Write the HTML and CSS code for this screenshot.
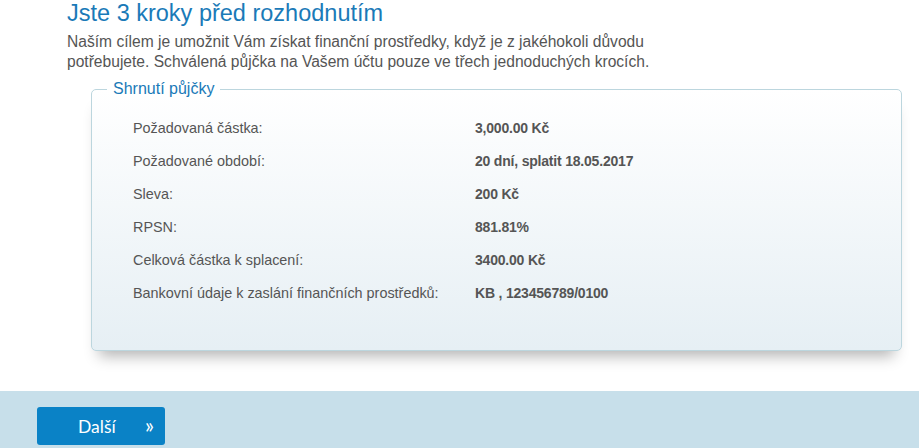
FILE: index.html
```html
<!DOCTYPE html>
<html lang="cs">
<head>
  <meta charset="UTF-8">
  <title>Shrnutí půjčky</title>
  <link rel="stylesheet" href="styles.css">
</head>
<body>

  <div class="intro">
    <h1>Jste 3 kroky před rozhodnutím</h1>
    <p>Naším cílem je umožnit Vám získat finanční prostředky, když je z jakéhokoli důvodu<br>
    potřebujete. Schválená půjčka na Vašem účtu pouze ve třech jednoduchých krocích.</p>
  </div>

  <!-- Loan summary -->
  <fieldset class="summary">
    <legend>Shrnutí půjčky</legend>
    <div class="row"><span class="label">Požadovaná částka:</span><span class="value">3,000.00 Kč</span></div>
    <div class="row"><span class="label">Požadované období:</span><span class="value">20 dní, splatit 18.05.2017</span></div>
    <div class="row"><span class="label">Sleva:</span><span class="value">200 Kč</span></div>
    <div class="row"><span class="label">RPSN:</span><span class="value">881.81%</span></div>
    <div class="row"><span class="label">Celková částka k splacení:</span><span class="value">3400.00 Kč</span></div>
    <div class="row"><span class="label">Bankovní údaje k zaslání finančních prostředků:</span><span class="value">KB , 123456789/0100</span></div>
  </fieldset>

  <div class="footer">
    <button class="next"><span>Další</span><span class="arrows">»</span></button>
  </div>

</body>
</html>
```

FILE: styles.css
```css
body {
  font-family: Arial, "Liberation Sans", sans-serif;
  background-color: #fff;
  margin: 0;
  color: #555;
}
.intro {
  padding: 0 0 0 67px;
}
.intro h1 {
  font-size: 23.5px;
  font-weight: normal;
  color: #1a7ab8;
  margin: 0;
  padding-top: 1px;
  line-height: 24px;
}
.intro p {
  font-size: 15.6px;
  line-height: 20px;
  margin: 7px 0 0;
}
.summary {
  margin: 7px 0 0 91px;
  width: 811px;
  box-sizing: border-box;
  padding: 12px 0 41px;
  border: 1px solid #bcd6de;
  border-radius: 5px;
  background: linear-gradient(#ffffff, #e6eff4);
  box-shadow: 0 13px 14px -8px rgba(0, 0, 0, 0.3);
}
.summary legend {
  font-size: 16px;
  line-height: 20px;
  color: #1a7ab8;
  margin-left: 15px;
  padding: 0 6px;
}
.row {
  display: flex;
  height: 33px;
  align-items: center;
  font-size: 14.4px;
}
.row .label {
  width: 342px;
  padding-left: 41px;
}
.row .value {
  font-weight: bold;
  font-size: 14px;
  letter-spacing: -0.2px;
}
.footer {
  margin-top: 40px;
  background-color: #c7dfea;
  height: 58px;
  padding: 16px 0 0 37px;
  box-sizing: border-box;
}
.next {
  width: 128px;
  height: 38px;
  background-color: #0a82c6;
  color: #fff;
  border: none;
  border-radius: 3px;
  font-family: Lato, sans-serif;
  font-size: 17.5px;
  display: flex;
  align-items: center;
  justify-content: space-between;
  padding: 0 11px 0 41px;
}
.next .arrows {
  font-size: 21px;
  line-height: 1;
  margin-top: -3px;
}
```
